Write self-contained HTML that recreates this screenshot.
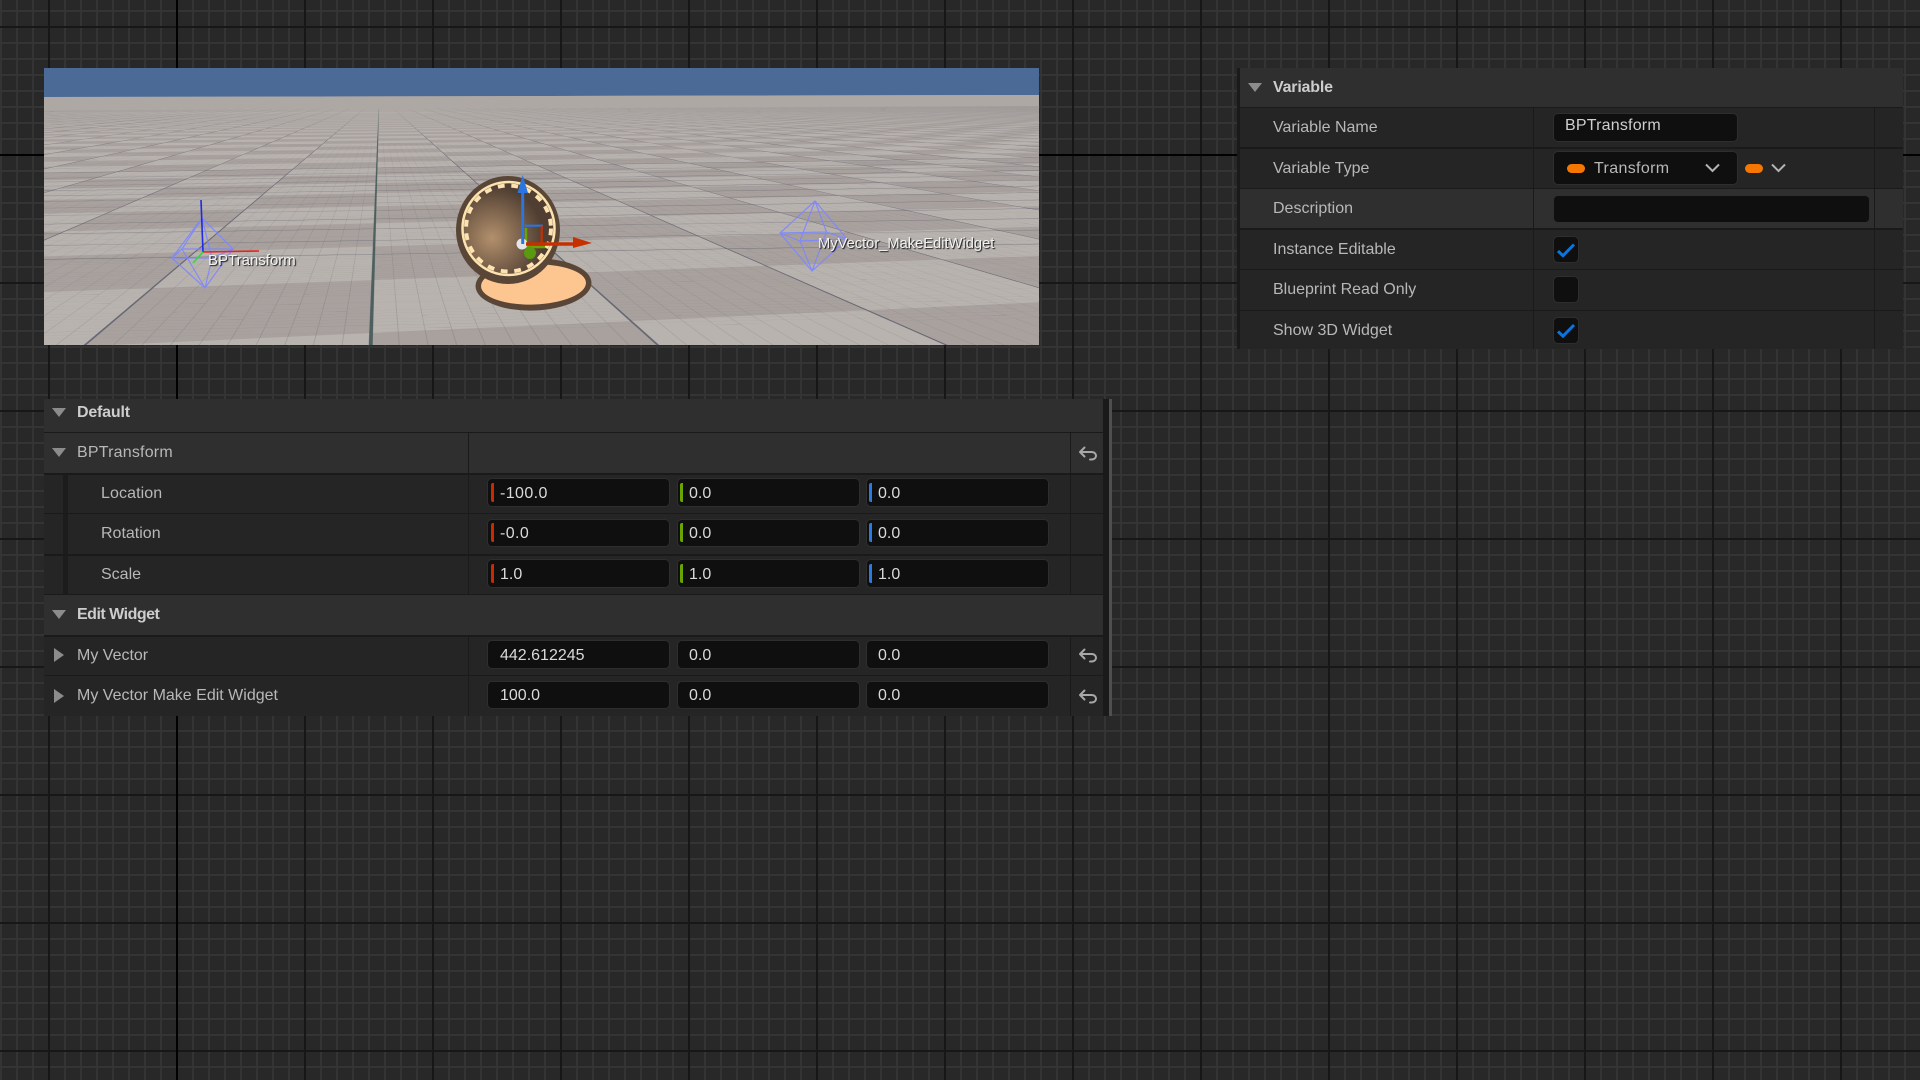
<!DOCTYPE html>
<html lang="en">
<head>
<meta charset="utf-8">
<title>BPTransform</title>
<style>
html,body{margin:0;padding:0;width:1920px;height:1080px;overflow:hidden;background:#282828}
body{position:relative;font-family:"Liberation Sans",Arial,sans-serif;font-size:16px;color:#b8b8b8}
#grid{position:absolute;left:0;top:0;width:1920px;height:1080px;background-color:#282828;
background-image:
linear-gradient(90deg,#000 2px,transparent 2px),
linear-gradient(#000 2px,transparent 2px),
linear-gradient(90deg,#171717 2px,transparent 2px),
linear-gradient(#171717 2px,transparent 2px),
linear-gradient(90deg,#343434 2px,transparent 2px),
linear-gradient(#343434 2px,transparent 2px);
background-size:2px 100%,100% 2px,128px 128px,128px 128px,16px 16px,16px 16px;
background-position:176px 0,0 154px,48px 0,0 26px,0 0,0 10px;
background-repeat:no-repeat,no-repeat,repeat,repeat,repeat,repeat}
#vp{position:absolute;left:44px;top:68px;width:995px;height:277px;overflow:hidden;background:#4b6a96}
#fill{position:absolute;inset:0;background:linear-gradient(#aea8a4 0,#aea8a4 44px,#b8b3af 44px);clip-path:polygon(0 29px,100% 27px,100% 100%,0 100%)}
#floor{position:absolute;left:0;top:0;width:995px;height:277px}
#fade{position:absolute;left:0;top:27px;width:995px;height:46px;background:linear-gradient(rgba(174,168,164,.92),rgba(174,168,164,0));clip-path:polygon(0 2px,100% 0,100% 100%,0 100%)}
svg{position:absolute;left:0;top:0;overflow:visible}
#vp svg{overflow:hidden}
.lbl3d{position:absolute;font-size:15px;line-height:18px;color:#f2f2f2;text-shadow:1px 1px 1px #111;white-space:nowrap}
.panel{position:absolute;background:#252525}
.hdr{background:#2f2f2f}
.div{position:absolute;background:#1a1a1a}
.t{position:absolute;line-height:20px;white-space:nowrap;transform:translateY(1px)}
.b{font-weight:bold;color:#cdcdcd;letter-spacing:-.2px}
.v{color:#dadada;transform:translate(-1px,1px)}
.box{position:absolute;box-sizing:border-box;background:#0f0f0f;border:1px solid #2e2e2e;border-radius:5px}
.c{position:absolute;width:3px;height:19px;border-radius:2px 0 0 2px}
.tri{position:absolute;width:0;height:0}
.down{border-left:7.5px solid transparent;border-right:7.5px solid transparent;border-top:9px solid #8c8c8c}
.right{border-top:7px solid transparent;border-bottom:7px solid transparent;border-left:10px solid #8c8c8c}
.pill{position:absolute;width:18px;height:9px;border-radius:5px;background:#f57600}
</style>
</head>
<body>
<div id="grid"></div>

<div id="vp">
  <div id="fill"></div>
  <svg id="floor" width="995" height="277" viewBox="44 68 995 277">
    <path id="fDark" fill="#a8a19e"/>
    <path id="fMinor" fill="rgba(105,105,105,.28)"/>
    <path id="fFar" fill="rgba(84,88,104,.3)"/>
    <path id="fMajor" fill="rgba(84,88,104,.8)" stroke="rgba(84,88,104,.16)" stroke-width=".5"/>
    <path id="fCenter" fill="#4d5f5e" stroke="rgba(77,95,94,.5)" stroke-width=".6"/>
  </svg>
  <div id="fade"></div>
</div>
<script>
(function(){
  var a=10*Math.PI/180,s=Math.sin(a),c=Math.cos(a),f=920,h=100,T=113.3,X0=-71.9,D0=388.2;
  var L=44,R=1039,B=345,U=68;
  function qmax(p){return (D0+T*p*s-40)/(T*c);}
  function P(p,q){
    var q2=Math.min(q,qmax(p));
    var dx=X0+T*(p*c+q2*s),d=D0+T*(p*s-q2*c);
    var sx=541.5+dx*f/d,sy=96+h*f/d;
    sy-=(sx-378)*0.002;
    return [sx,sy];
  }
  function clip(pts,inside,cross){
    var out=[],n=pts.length,k;
    for(k=0;k<n;k++){
      var A=pts[k],E=pts[(k+1)%n],ia=inside(A),ie=inside(E);
      if(ia){out.push(A);}
      if(ia!==ie){out.push(cross(A,E));}
    }
    return out;
  }
  function atX(x){return function(A,E){var t=(x-A[0])/(E[0]-A[0]);return [x,A[1]+t*(E[1]-A[1])];};}
  function atY(y){return function(A,E){var t=(y-A[1])/(E[1]-A[1]);return [A[0]+t*(E[0]-A[0]),y];};}
  function Q(p1,q1,p2,q2){
    var pts=[P(p1,q1),P(p2,q1),P(p2,q2),P(p1,q2)];
    pts=clip(pts,function(v){return v[0]>=L;},atX(L));
    if(pts.length){pts=clip(pts,function(v){return v[0]<=R;},atX(R));}
    if(pts.length){pts=clip(pts,function(v){return v[1]>=U;},atY(U));}
    if(pts.length){pts=clip(pts,function(v){return v[1]<=B;},atY(B));}
    if(pts.length<3){return '';}
    var o='M',k;
    for(k=0;k<pts.length;k++){o+=(k?'L':'')+pts[k][0].toFixed(1)+' '+pts[k][1].toFixed(1);}
    return o+'Z';
  }
  var dark='',minor='',major='',far='',center='',i,j;
  for(j=3;j>=-45;j--){
    for(i=-60;i<=60;i++){
      if(((i+j)%2+2)%2===0){dark+=Q(i,j,i+1,j+1);}
    }
  }
  var wm=0.0035,wM=1/T;
  for(i=-400;i<=400;i++){
    var pp=i/10;
    if(i%10!==0){minor+=Q(pp-wm/2,-14,pp+wm/2,4);}
  }
  for(j=40;j>=-140;j--){
    var qq=j/10;
    if(j%10!==0){minor+=Q(-40,qq-wm/2,40,qq+wm/2);}
  }
  for(i=-60;i<=60;i++){
    if(i!==0){major+=Q(i-wM/2,-60,i+wM/2,4);}
  }
  for(j=4;j>=-60;j--){
    if(j>=-8){major+=Q(-60,j-wM/2,60,j+wM/2);}
    else{far+=Q(-60,j-wM/2,60,j+wM/2);}
  }
  center=Q(-0.7/T,-60,0.7/T,4);
  document.getElementById('fDark').setAttribute('d',dark);
  document.getElementById('fMinor').setAttribute('d',minor);
  document.getElementById('fFar').setAttribute('d',far);
  document.getElementById('fMajor').setAttribute('d',major);
  document.getElementById('fCenter').setAttribute('d',center);
})();
</script>

<svg width="1920" height="1080" viewBox="0 0 1920 1080">
  <defs>
    <radialGradient id="sph" gradientUnits="userSpaceOnUse" cx="492" cy="238" r="52">
      <stop offset="0" stop-color="#b2906c"/>
      <stop offset="1" stop-color="#503e32"/>
    </radialGradient>
  </defs>
  <!-- left wire diamond -->
  <g fill="none" stroke="#7d86ff" stroke-width="1.2" opacity=".9">
    <path d="M202 218L172 258L205 288L233 249ZM202 218L182 249L205 288M202 218L212 258L205 288M172 258L182 249L233 249L212 258Z"/>
  </g>
  <path d="M201 200L203 252" stroke="#1f2be0" stroke-width="1.6"/>
  <path d="M203 252L259 251" stroke="#ea2222" stroke-width="1.6"/>
  <path d="M203 252L193 263" stroke="#35d83a" stroke-width="1.6"/>
  <!-- right wire diamond -->
  <g fill="none" stroke="#7d86ff" stroke-width="1.2" opacity=".9">
    <path d="M815 201L780 233L812 271L847 239ZM815 201L800 241L812 271M815 201L826.5 232L812 271M780 233L800 241L847 239L826.5 232Z"/>
  </g>
  <!-- base + sphere -->
  <ellipse cx="533.5" cy="284.5" rx="58" ry="26" fill="#5a4636" transform="rotate(-2 533.5 284.5)"/>
  <ellipse cx="533.5" cy="284.5" rx="52.5" ry="20" fill="#fdc590" transform="rotate(-2 533.5 284.5)"/>
  <ellipse cx="508" cy="230" rx="52" ry="54" fill="#5a4636"/>
  <ellipse cx="508.5" cy="228.5" rx="46" ry="46.5" fill="url(#sph)" stroke="#fde3b0" stroke-width="2.5"/>
  <ellipse cx="508.5" cy="228.5" rx="42.5" ry="43" fill="none" stroke="#fde3b0" stroke-width="4" stroke-dasharray="6.8 6.8"/>
  <!-- gizmo -->
  <path d="M526 228V247H545" fill="none" stroke="#6aa400" stroke-width="2.4"/>
  <path d="M525 225.7H543" stroke="#2a75e0" stroke-width="2.2"/>
  <path d="M541.7 225.7V244" stroke="#c63000" stroke-width="2.2"/>
  <circle cx="522" cy="244" r="5.5" fill="#e6e6e6"/>
  <circle cx="530" cy="253" r="6" fill="#5a9a10"/>
  <path d="M522.7 244V192" stroke="#2a75e0" stroke-width="3"/>
  <path d="M522.7 175L528 193H517.5Z" fill="#2a75e0"/>
  <path d="M526 244H574" stroke="#c63000" stroke-width="3.4"/>
  <path d="M573 237L592 243L573 248Z" fill="#c63000"/>
</svg>

<div class="lbl3d" style="left:208px;top:252px">BPTransform</div>
<div class="lbl3d" style="left:818px;top:235px;font-size:14.7px">MyVector_MakeEditWidget</div>

<!-- Variable panel -->
<div class="panel" style="left:1240px;top:68px;width:663px;height:281px"></div>
<div class="div" style="left:1237px;top:68px;width:3px;height:281px"></div>
<div class="panel hdr" style="left:1240px;top:68px;width:663px;height:39px"></div>
<div class="panel hdr" style="left:1240px;top:188px;width:663px;height:40px"></div>
<div class="div" style="left:1240px;top:107px;width:663px;height:1px"></div>
<div class="div" style="left:1240px;top:147px;width:663px;height:2px"></div>
<div class="div" style="left:1240px;top:188px;width:663px;height:1px"></div>
<div class="div" style="left:1240px;top:228px;width:663px;height:2px"></div>
<div class="div" style="left:1240px;top:269px;width:663px;height:1px"></div>
<div class="div" style="left:1240px;top:310px;width:663px;height:1px"></div>
<div class="div" style="left:1533px;top:108px;width:1px;height:241px"></div>
<div class="div" style="left:1874px;top:108px;width:1px;height:241px"></div>
<div class="tri down" style="left:1248px;top:83px"></div>
<div class="t b" style="left:1273px;top:77px">Variable</div>
<div class="t" style="left:1273px;top:117px">Variable Name</div>
<div class="t" style="left:1273px;top:158px">Variable Type</div>
<div class="t" style="left:1273px;top:198px">Description</div>
<div class="t" style="left:1273px;top:239px">Instance Editable</div>
<div class="t" style="left:1273px;top:279px">Blueprint Read Only</div>
<div class="t" style="left:1273px;top:320px">Show 3D Widget</div>

<div class="box" style="left:1553px;top:113px;width:185px;height:29px"></div>
<div class="t" style="left:1565px;top:115px;color:#cfcfcf;letter-spacing:.2px">BPTransform</div>
<div class="box" style="left:1553px;top:151px;width:185px;height:34px"></div>
<div class="pill" style="left:1567px;top:164px"></div>
<div class="t" style="left:1594px;top:158px;letter-spacing:.35px">Transform</div>
<div class="pill" style="left:1745px;top:164px"></div>
<svg width="1920" height="1080" viewBox="0 0 1920 1080">
  <path d="M1706 164.5L1712.5 171L1719 164.5M1772 164.5L1778.5 171L1785 164.5" fill="none" stroke="#b4b4b4" stroke-width="2"/>
</svg>
<div class="box" style="left:1553px;top:195px;width:317px;height:28px"></div>
<div class="box" style="left:1553px;top:236px;width:26px;height:27px"></div>
<div class="box" style="left:1553px;top:276px;width:26px;height:27px"></div>
<div class="box" style="left:1553px;top:317px;width:26px;height:27px"></div>
<svg width="1920" height="1080" viewBox="0 0 1920 1080">
  <path d="M1558 251L1563 255.7L1574 244.5M1558 331.5L1563 336.2L1574 325" fill="none" stroke="#0a74e0" stroke-width="3"/>
</svg>

<!-- Default panel -->
<div class="panel" style="left:44px;top:399px;width:1059px;height:317px"></div>
<div class="panel hdr" style="left:44px;top:399px;width:1059px;height:74px"></div>
<div class="panel hdr" style="left:44px;top:594px;width:1059px;height:41px"></div>
<div class="div" style="left:1103px;top:399px;width:6px;height:317px"></div>
<div style="position:absolute;left:1109px;top:399px;width:3px;height:317px;background:#505050"></div>
<div class="div" style="left:63px;top:473px;width:5px;height:121px;background:#1c1c1c"></div>
<div class="div" style="left:44px;top:432px;width:1059px;height:1px"></div>
<div class="div" style="left:44px;top:473px;width:1059px;height:2px"></div>
<div class="div" style="left:44px;top:513px;width:1059px;height:1px"></div>
<div class="div" style="left:44px;top:554px;width:1059px;height:2px"></div>
<div class="div" style="left:44px;top:594px;width:1059px;height:1px"></div>
<div class="div" style="left:44px;top:635px;width:1059px;height:2px"></div>
<div class="div" style="left:44px;top:675px;width:1059px;height:1px"></div>
<div class="div" style="left:468px;top:433px;width:1px;height:161px"></div>
<div class="div" style="left:468px;top:636px;width:1px;height:80px"></div>
<div class="div" style="left:1070px;top:433px;width:1px;height:161px"></div>
<div class="div" style="left:1070px;top:636px;width:1px;height:80px"></div>

<div class="tri down" style="left:52px;top:408px"></div>
<div class="t b" style="left:77px;top:402px">Default</div>
<div class="tri down" style="left:52px;top:448px"></div>
<div class="t" style="left:77px;top:442px;letter-spacing:.2px">BPTransform</div>
<div class="t" style="left:101px;top:483px;letter-spacing:.1px">Location</div>
<div class="t" style="left:101px;top:523px">Rotation</div>
<div class="t" style="left:101px;top:564px">Scale</div>
<div class="tri down" style="left:52px;top:610px"></div>
<div class="t b" style="left:77px;top:604px;letter-spacing:-.5px">Edit Widget</div>
<div class="tri right" style="left:54px;top:648px"></div>
<div class="t" style="left:77px;top:645px">My Vector</div>
<div class="tri right" style="left:54px;top:689px"></div>
<div class="t" style="left:77px;top:685px">My Vector Make Edit Widget</div>

<!-- row: Location -->
<div class="box" style="left:487px;top:478px;width:183px;height:29px"></div>
<div class="box" style="left:677px;top:478px;width:183px;height:29px"></div>
<div class="box" style="left:866px;top:478px;width:183px;height:29px"></div>
<div class="c" style="left:491px;top:483px;background:#c92a00"></div>
<div class="c" style="left:680px;top:483px;background:#6aa400"></div>
<div class="c" style="left:869px;top:483px;background:#2a7ae0"></div>
<div class="t v" style="left:501px;top:483px;letter-spacing:.4px">-100.0</div>
<div class="t v" style="left:690px;top:483px">0.0</div>
<div class="t v" style="left:879px;top:483px">0.0</div>
<!-- row: Rotation -->
<div class="box" style="left:487px;top:519px;width:183px;height:28px"></div>
<div class="box" style="left:677px;top:519px;width:183px;height:28px"></div>
<div class="box" style="left:866px;top:519px;width:183px;height:28px"></div>
<div class="c" style="left:491px;top:523px;background:#c92a00"></div>
<div class="c" style="left:680px;top:523px;background:#6aa400"></div>
<div class="c" style="left:869px;top:523px;background:#2a7ae0"></div>
<div class="t v" style="left:501px;top:523px;letter-spacing:.4px">-0.0</div>
<div class="t v" style="left:690px;top:523px">0.0</div>
<div class="t v" style="left:879px;top:523px">0.0</div>
<!-- row: Scale -->
<div class="box" style="left:487px;top:559px;width:183px;height:29px"></div>
<div class="box" style="left:677px;top:559px;width:183px;height:29px"></div>
<div class="box" style="left:866px;top:559px;width:183px;height:29px"></div>
<div class="c" style="left:491px;top:564px;background:#c92a00"></div>
<div class="c" style="left:680px;top:564px;background:#6aa400"></div>
<div class="c" style="left:869px;top:564px;background:#2a7ae0"></div>
<div class="t v" style="left:501px;top:564px">1.0</div>
<div class="t v" style="left:690px;top:564px">1.0</div>
<div class="t v" style="left:879px;top:564px">1.0</div>
<!-- row: My Vector -->
<div class="box" style="left:487px;top:640px;width:183px;height:29px"></div>
<div class="box" style="left:677px;top:640px;width:183px;height:29px"></div>
<div class="box" style="left:866px;top:640px;width:183px;height:29px"></div>
<div class="t v" style="left:501px;top:645px">442.612245</div>
<div class="t v" style="left:690px;top:645px">0.0</div>
<div class="t v" style="left:879px;top:645px">0.0</div>
<!-- row: Make Edit Widget -->
<div class="box" style="left:487px;top:681px;width:183px;height:28px"></div>
<div class="box" style="left:677px;top:681px;width:183px;height:28px"></div>
<div class="box" style="left:866px;top:681px;width:183px;height:28px"></div>
<div class="t v" style="left:501px;top:685px">100.0</div>
<div class="t v" style="left:690px;top:685px">0.0</div>
<div class="t v" style="left:879px;top:685px">0.0</div>

<svg width="1920" height="1080" viewBox="0 0 1920 1080">
  <g fill="none" stroke="#a8a8a8" stroke-width="2" stroke-linecap="round" stroke-linejoin="round">
    <path d="M1084.5 447.5L1080 452L1084.5 456.5M1080 452H1091.5C1097.5 452 1097.5 459.5 1091.5 459.5H1090"/>
    <path d="M1084.5 649.5L1080 654L1084.5 658.5M1080 654H1091.5C1097.5 654 1097.5 661.5 1091.5 661.5H1090"/>
    <path d="M1084.5 690.5L1080 695L1084.5 699.5M1080 695H1091.5C1097.5 695 1097.5 702.5 1091.5 702.5H1090"/>
  </g>
</svg>
</body>
</html>
